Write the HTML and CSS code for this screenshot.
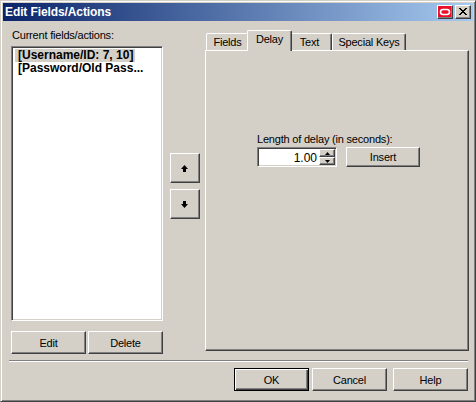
FILE: index.html
```html
<!DOCTYPE html>
<html>
<head>
<meta charset="utf-8">
<title>Edit Fields/Actions</title>
<link rel="stylesheet" href="styles.css">
</head>
<body>
<div class="window">
  <div class="titlebar">
    <span class="title">Edit Fields/Actions</span>
    <div class="caption-btns">
      <span class="cap-btn cap-oracle"><svg width="12" height="8" viewBox="0 0 12 8"><rect x="1.5" y="1.5" width="9" height="5" rx="2.5" ry="2.5" fill="none" stroke="#fff" stroke-width="1.6"/></svg></span>
      <span class="cap-btn cap-close"><svg width="8" height="7" viewBox="0 0 8 7"><path d="M0 0h2v1h-2zM1 1h2v1h-2zM2 2h1v1h-1zM5 2h1v1h-1zM5 1h2v1h-2zM6 0h2v1h-2zM3 3h2v1h-2zM2 4h1v1h-1zM5 4h1v1h-1zM1 5h2v1h-2zM5 5h2v1h-2zM0 6h2v1h-2zM6 6h2v1h-2zM3 2h2v1h-2zM3 4h2v1h-2z" fill="#000"/></svg></span>
    </div>
  </div>
  <div class="content">
    <div class="main">
      <div class="left">
        <div class="label">Current fields/actions:</div>
        <div class="listbox">
          <div class="item selected">[Username/ID: 7, 10]</div>
          <div class="item">[Password/Old Pass...</div>
        </div>
        <div class="btn-row">
          <button class="btn btn-small">Edit</button>
          <button class="btn btn-small">Delete</button>
        </div>
      </div>
      <div class="mid">
        <button class="btn arrow"><svg width="7" height="7" viewBox="0 0 7 7"><path d="M3.5 0L7 4H5V7H2V4H0Z" fill="#000"/></svg></button>
        <button class="btn arrow"><svg width="7" height="7" viewBox="0 0 7 7"><path d="M2 0H5V3H7L3.5 7L0 3H2Z" fill="#000"/></svg></button>
      </div>
      <div class="tabs">
        <div class="tabstrip">
          <div class="tab tab-fields">Fields</div>
          <div class="tab tab-delay active">Delay</div>
          <div class="tab tab-text">Text</div>
          <div class="tab tab-special">Special Keys</div>
        </div>
        <div class="panel">
          <div class="label delay-label">Length of delay (in seconds):</div>
          <div class="delay-row">
            <div class="spin-field">
              <span class="value">1.00</span>
              <span class="spinner">
                <span class="spin-btn"><svg width="5" height="3" viewBox="0 0 5 3"><path d="M2.5 0L5 3H0Z" fill="#000"/></svg></span>
                <span class="spin-btn"><svg width="5" height="3" viewBox="0 0 5 3"><path d="M0 0H5L2.5 3Z" fill="#000"/></svg></span>
              </span>
            </div>
            <button class="btn btn-insert">Insert</button>
          </div>
        </div>
      </div>
    </div>
    <div class="separator"></div>
    <div class="footer">
      <button class="btn btn-footer default">OK</button>
      <button class="btn btn-footer btn-cancel">Cancel</button>
      <button class="btn btn-footer btn-help">Help</button>
    </div>
  </div>
</div>
</body>
</html>
```
FILE: styles.css
```css
* { box-sizing: border-box; }
html, body { margin: 0; padding: 0; background: #d4d0c8; }
body {
  font-family: "Liberation Sans", Arial, sans-serif;
  font-size: 11px;
  letter-spacing: -0.2px;
  color: #000;
}
.window {
  width: 476px;
  height: 402px;
  background: #d4d0c8;
  border: 1px solid;
  border-color: #d4d0c8 #404040 #404040 #d4d0c8;
  box-shadow: inset 1px 1px #fff, inset -1px -1px #808080;
  padding: 2px;
  display: flex;
  flex-direction: column;
}
.titlebar {
  height: 18px;
  background: linear-gradient(to right, #0a246a, #a6caf0);
  display: flex;
  align-items: flex-start;
  justify-content: space-between;
  padding: 0 2px 0 2px;
}
.title {
  color: #fff;
  font-weight: bold;
  font-size: 12px;
  line-height: 18px;
  letter-spacing: -0.1px;
}
.caption-btns {
  display: flex;
  gap: 2px;
  margin-top: 2px;
}
.cap-btn {
  width: 16px;
  height: 14px;
  border: 1px solid;
  border-color: #fff #404040 #404040 #fff;
  box-shadow: inset -1px -1px #808080;
  display: flex;
  align-items: center;
  justify-content: center;
  background: #d4d0c8;
}
.cap-oracle { background: #e8102a; }
.cap-oracle svg { display: block; margin-top: -1px; }
.cap-close svg { display: block; margin-top: -1px; margin-left: -1px; }

.content {
  flex: 1;
  display: flex;
  flex-direction: column;
}
.main {
  display: flex;
  align-items: flex-start;
  padding: 8px 0 0 8px;
  height: 333px;
}
.left {
  width: 152px;
  display: flex;
  flex-direction: column;
}
.label {
  line-height: 13px;
  white-space: nowrap;
}
.left .label { margin-left: 1px; margin-bottom: 4px; }
.listbox {
  height: 275px;
  background: #fff;
  border: 1px solid;
  border-color: #808080 #fff #fff #808080;
  box-shadow: inset 1px 1px #404040, inset -1px -1px #d4d0c8;
  padding: 2px 3px;
}
.item {
  width: fit-content;
  font-weight: bold;
  font-size: 12px;
  letter-spacing: 0;
  line-height: 13px;
  padding: 0 2px 0 3px;
  white-space: nowrap;
}
.item.selected { background: #d4d0c8; }
.btn-row {
  display: flex;
  justify-content: space-between;
  margin-top: 10px;
}
.btn {
  font-family: inherit;
  font-size: 11px;
  letter-spacing: -0.2px;
  color: #000;
  background: #d4d0c8;
  border: 1px solid;
  border-color: #fff #404040 #404040 #fff;
  box-shadow: inset -1px -1px #808080;
  padding: 0;
  margin: 0;
  display: flex;
  align-items: center;
  justify-content: center;
  border-radius: 0;
  outline: none;
}
.btn-small { width: 75px; height: 23px; }
.mid {
  width: 42px;
  display: flex;
  flex-direction: column;
  gap: 6px;
  padding: 124px 0 0 7px;
}
.arrow { width: 30px; height: 30px; }
.arrow svg { display: block; margin: 1px 2px 0 0; }

.tabs {
  width: 264px;
  margin-top: 1px;
  display: flex;
  flex-direction: column;
}
.tabstrip {
  display: flex;
  align-items: flex-end;
  height: 20px;
  padding-left: 1px;
}
.tab {
  height: 17px;
  line-height: 16px;
  text-align: center;
  background: #d4d0c8;
  border-top: 1px solid #fff;
  border-left: 1px solid #fff;
  border-right: 1px solid #404040;
  box-shadow: inset -1px 0 #808080;
  border-top-left-radius: 2px;
  border-top-right-radius: 2px;
  white-space: nowrap;
}
.tab-fields { width: 43px; }
.tab-text { width: 42px; padding-right: 3px; }
.tab-special { width: 74px; }
.tab.active {
  width: 45px;
  height: 21px;
  margin: 0 -2px -1px -2px;
  padding-top: 0;
  line-height: 16px;
  position: relative;
  z-index: 1;
}
.panel {
  height: 301px;
  border: 1px solid;
  border-color: #fff #404040 #404040 #fff;
  box-shadow: inset -1px -1px #808080;
  padding: 82px 0 0 51px;
}
.delay-label { margin-bottom: 1px; }
.delay-row {
  display: flex;
  gap: 9px;
}
.spin-field {
  width: 80px;
  height: 20px;
  background: #fff;
  border: 1px solid;
  border-color: #808080 #fff #fff #808080;
  box-shadow: inset 1px 1px #404040, inset -1px -1px #d4d0c8;
  padding: 1px 1px 1px 1px;
  display: flex;
  justify-content: flex-end;
}
.value {
  font-size: 12px;
  letter-spacing: 0;
  line-height: 16px;
  padding: 1px 2px 0 0;
}
.spinner {
  width: 16px;
  display: flex;
  flex-direction: column;
  margin-right: 0;
}
.spin-btn {
  height: 8px;
  border: 1px solid;
  border-color: #fff #404040 #404040 #fff;
  box-shadow: inset -1px -1px #808080;
  background: #d4d0c8;
  display: flex;
  align-items: center;
  justify-content: center;
}
.spin-btn svg { display: block; }
.btn-insert { width: 74px; height: 20px; }

.separator {
  height: 2px;
  margin: 6px 5px 0 6px;
  border-top: 1px solid #808080;
  border-bottom: 1px solid #fff;
}
.footer {
  display: flex;
  justify-content: flex-end;
  padding: 6px 5px 0 0;
}
.btn-footer { width: 75px; height: 23px; }
.btn-cancel { margin-left: 3px; }
.btn-help { margin-left: 6px; }
.btn.default {
  border: 1px solid #000;
  box-shadow: inset 1px 1px #fff, inset -1px -1px #404040, inset -2px -2px #808080;
}
```
